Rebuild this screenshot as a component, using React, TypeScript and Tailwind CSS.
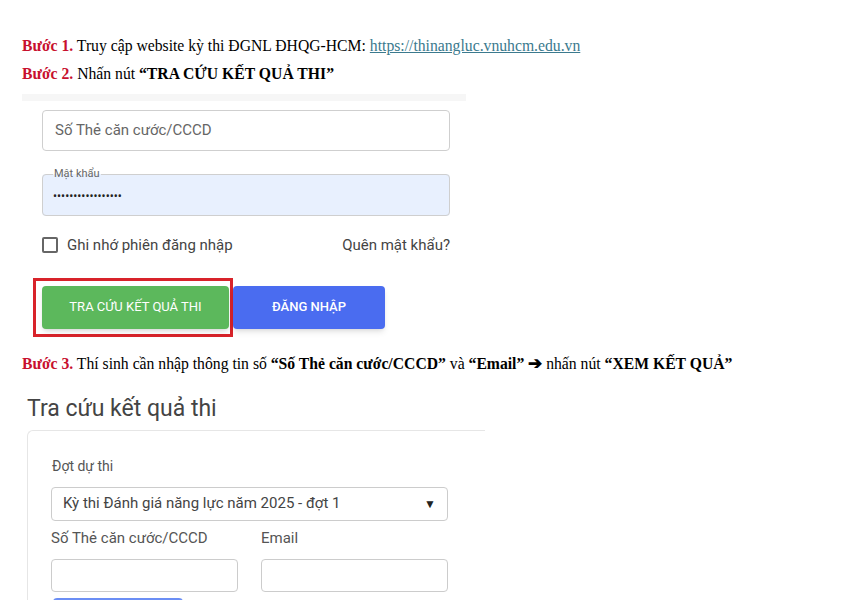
export default function App() {
  const serif = { fontFamily: '"Liberation Serif", "Times New Roman", serif' };
  const sans = { fontFamily: 'Roboto, "Noto Sans", Arial, sans-serif' };

  return (
    <div className="w-[864px] h-[600px] overflow-hidden bg-white text-black">
      {/* hướng dẫn bước 1, 2 */}
      <div style={serif} className="pl-[22px] pt-[32px] text-[15.7px] leading-[28px]">
        <p>
          <span className="font-bold text-[#c8102e]">Bước 1.</span> Truy cập website kỳ thi ĐGNL ĐHQG-HCM:{" "}
          <a href="#" className="text-[#3b7a8e] underline">https://thinangluc.vnuhcm.edu.vn</a>
        </p>
        <p>
          <span className="font-bold text-[#c8102e]">Bước 2.</span> Nhấn nút <b>“TRA CỨU KẾT QUẢ THI”</b>
        </p>
      </div>

      {/* ảnh chụp form đăng nhập */}
      <div style={sans} className="ml-[22px] mt-[6px] w-[444px]">
        <div className="h-[7px] bg-[#f6f6f6]" />
        <div className="pl-[20px] pt-[9px] w-[428px]">
          <div className="h-[41px] rounded border border-[#cfcfcf] bg-white px-[12px] flex items-center text-[15px] text-[#666]">
            Số Thẻ căn cước/CCCD
          </div>

          <fieldset className="mt-[16px] h-[49px] rounded border border-[#cfcfcf] bg-[#e8f0fe] px-[10px] pt-0">
            <legend className="px-[1px] text-[11px] text-[#666] leading-[14px]">Mật khẩu</legend>
            <div className="text-[12px] text-[#222] leading-[20px] pt-[5px]">•••••••••••••••••</div>
          </fieldset>

          <div className="mt-[18px] flex items-center justify-between text-[15px] text-[#444]">
            <label className="flex items-center gap-[9px]">
              <span className="w-[16px] h-[16px] rounded-[2px] border-2 border-[#666] bg-white" />
              Ghi nhớ phiên đăng nhập
            </label>
            <span>Quên mật khẩu?</span>
          </div>

          <div className="mt-[21px] ml-[-9px] flex items-start">
            <div className="border-[3px] border-[#d8232a] pt-[5px] pl-[6px] pr-[1px] pb-[5px]">
              <button className="w-[187px] h-[43px] rounded bg-[#5cb85c] text-white text-[13px] shadow-md">
                TRA CỨU KẾT QUẢ THI
              </button>
            </div>
            <button className="mt-[8px] w-[152px] h-[43px] rounded bg-[#4a6cf0] text-white text-[13px] font-medium shadow-md">
              ĐĂNG NHẬP
            </button>
          </div>
        </div>
      </div>

      {/* hướng dẫn bước 3 */}
      <p style={serif} className="pl-[22px] mt-[13px] text-[15.7px] leading-[28px]">
        <span className="font-bold text-[#c8102e]">Bước 3.</span> Thí sinh cần nhập thông tin số{" "}
        <b>“Số Thẻ căn cước/CCCD”</b> và <b>“Email”</b> <b className="text-[17px]">➔</b> nhấn nút <b>“XEM KẾT QUẢ”</b>
      </p>

      {/* ảnh chụp form tra cứu */}
      <div style={sans} className="pl-[27px]">
        <h2 className="mt-[17px] text-[23px] leading-[28px] text-[#444]">Tra cứu kết quả thi</h2>
        <div className="mt-[7px] w-[458px] rounded-tl-md border-l border-t border-[#e6e6e6] pl-[24px] pt-[25px]">
          <div className="text-[14px] text-[#555]">Đợt dự thi</div>
          <div className="mt-[10px] w-[397px] h-[34px] rounded border border-[#ccc] flex items-center justify-between px-[11px] text-[15px] text-[#444] ml-[-1px]">
            <span>Kỳ thi Đánh giá năng lực năm 2025 - đợt 1</span>
            <span className="text-[12px] text-[#222]">▼</span>
          </div>
          <div className="mt-[7px] flex gap-[23px] ml-[-1px]">
            <div className="w-[187px]">
              <div className="text-[15px] text-[#555] leading-[20px]">Số Thẻ căn cước/CCCD</div>
              <div className="mt-[11px] h-[33px] rounded border border-[#ccc]" />
            </div>
            <div className="w-[187px]">
              <div className="text-[15px] text-[#555] leading-[20px]">Email</div>
              <div className="mt-[11px] h-[33px] rounded border border-[#ccc]" />
            </div>
          </div>
          <div className="mt-[6px] ml-[1px] w-[130px] h-[30px] rounded bg-[#6b8ef5]" />
        </div>
      </div>
    </div>
  );
}
